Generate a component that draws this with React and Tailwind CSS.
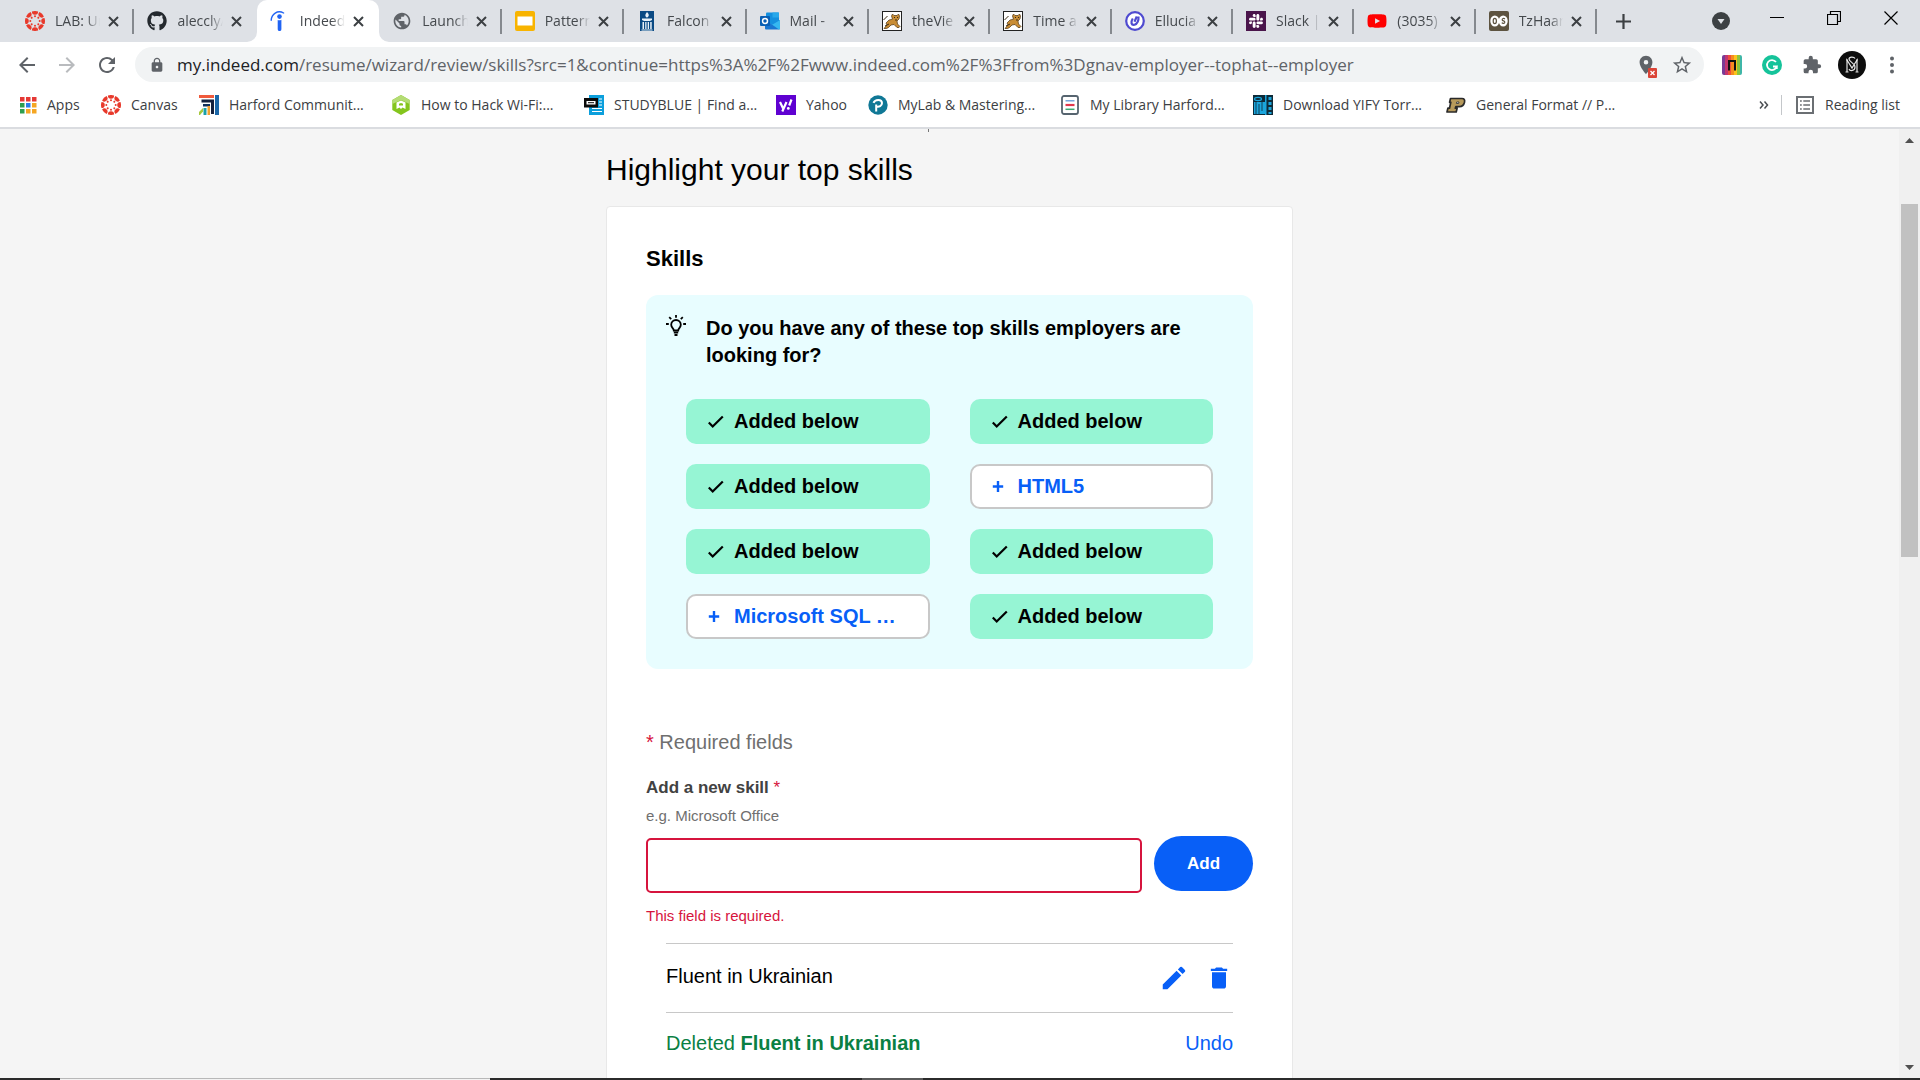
import { FaGithub, FaYoutube, FaSlack } from "react-icons/fa";
import { MdEdit, MdDelete, MdLock, MdPublic, MdArrowBack, MdArrowForward, MdRefresh, MdStarBorder, MdLocationOn } from "react-icons/md";

const TICKS = [0, 45, 90, 135, 180, 225, 270, 315];

function CanvasLogo() {
  return (
    <svg viewBox="0 0 20 20" className="size-5 shrink-0" aria-hidden="true">
      {TICKS.map((a) => (
        <g key={a} transform={`rotate(${a} 10 10)`} fill="#e8392b">
          <path d="M6.900 .5a10 10 0 0 1 6.200 0a3.100 3.300 0 0 1-6.200 0z" />
          <circle cx="10" cy="5.300" r="1" />
        </g>
      ))}
    </svg>
  );
}

function IndeedLogo() {
  return (
    <svg viewBox="0 0 20 20" className="size-5 shrink-0" aria-hidden="true">
      <circle cx="9.500" cy="5.600" r="2.300" fill="#2164f3" />
      <path d="M7.700 9q1.800.8 3.700-.2v9.400a1.800 1.800 0 0 1-3.700 0z" fill="#2164f3" />
      <path d="M1.200 9.200C1.500 3.200 7.500-1.500 13.600 2" fill="none" stroke="#2164f3" strokeWidth="1.400" strokeLinecap="round" />
    </svg>
  );
}

function SlidesLogo() {
  return (
    <svg viewBox="0 0 20 20" className="size-5 shrink-0" aria-hidden="true">
      <rect width="20" height="20" rx="2" fill="#f8b400" />
      <rect x="2.500" y="5.500" width="15" height="9" fill="#fff" />
    </svg>
  );
}

function TorchLogo() {
  return (
    <svg viewBox="0 0 20 20" className="size-5 shrink-0" aria-hidden="true">
      <rect x="3" width="14" height="20" fill="#0b4a84" />
      <path d="M10 1c2.500 2.500 2.300 4.500 0 5.600C7.700 5.500 8 3.500 10 1zM5 7.500h10v1.500l-2 1H7l-2-1zM5.500 11h1.500v7H5.500zM8.200 11h1.300v7H8.200zM10.700 11h1.300v7h-1.300zM13.200 11h1.500v7h-1.500zM4.500 18.400h11v1h-11z" fill="#e8f1f8" />
    </svg>
  );
}

function OutlookLogo() {
  return (
    <svg viewBox="0 0 20 20" className="size-5 shrink-0" aria-hidden="true">
      <rect x="6" y="1.500" width="13" height="13" rx="1" fill="#1490df" />
      <rect x="12.500" y="1.500" width="6.500" height="5" fill="#28a8ea" />
      <path d="M5 9l7.500 4.500L20 9v8.500a1 1 0 0 1-1 1H6a1 1 0 0 1-1-1z" fill="#1976d2" />
      <path d="M20 9v8.500a1 1 0 0 1-1 1L9 11.500l3.500 2z" fill="#35b8f1" />
      <rect y="5" width="10" height="10" rx="1" fill="#0a5fb4" />
      <circle cx="5" cy="10" r="2.500" fill="none" stroke="#fff" strokeWidth="1.500" />
    </svg>
  );
}

function CougarLogo() {
  return (
    <svg viewBox="0 0 20 20" className="size-5 shrink-0" aria-hidden="true">
      <rect x=".5" y=".5" width="19" height="19" fill="#fff" stroke="#222" />
      <path d="M2 17.500l3-3.500-1-2 3-3 3.500-.8-1-3.200 1-2 1.500 1.500h3l1.500-1.500 1 2-.5 3-2 2 .5 3 2.500 2.500-1 1-2 0-3-3-3 .5-2.500 2.500-2 1z" fill="#c98d35" stroke="#4d3412" strokeWidth=".7" />
      <path d="M1.500 9l4-4M12 6.500h1M15 6.500h1M13 9h2M3 15l4-2" stroke="#3a2a12" strokeWidth="1" />
    </svg>
  );
}

function EllucianLogo() {
  return (
    <svg viewBox="0 0 20 20" className="size-5 shrink-0" aria-hidden="true">
      <circle cx="10" cy="10" r="8.800" fill="#fff" stroke="#4f4bd0" strokeWidth="2.200" />
      <path d="M11.800 5.500L9.500 10.800M7.800 7.500c-2.600 4-1.300 7 1.700 6.300 2.800-.8 4.300-4.500 4-8.300" fill="none" stroke="#4f4bd0" strokeWidth="2.200" />
    </svg>
  );
}

function SlackTile() {
  return (
    <span className="flex size-5 shrink-0 items-center justify-center bg-[#4a154b] text-white">
      <FaSlack className="size-4" />
    </span>
  );
}

function OsLogo() {
  return (
    <span className="flex size-5 shrink-0 items-center justify-center rounded-xs bg-[#5d5340]">
      <svg viewBox="0 0 20 20" className="size-5" aria-hidden="true">
        <ellipse cx="5.800" cy="10" rx="4.500" ry="5.500" fill="#fff" />
        <ellipse cx="14.200" cy="10" rx="4.500" ry="5.500" fill="#fff" />
        <ellipse cx="5.800" cy="10" rx="1.600" ry="2.600" fill="none" stroke="#5d5340" strokeWidth="1.200" />
        <path d="M15.900 8c-1-1-2.900-.6-2.700.8s2.700.9 2.600 2.400-2.200 1.500-3 .5" fill="none" stroke="#5d5340" strokeWidth="1.200" />
      </svg>
    </span>
  );
}

const GRID9 = ["#e53935", "#e53935", "#e53935", "#2e9e4f", "#2b7de9", "#f5a623", "#2e9e4f", "#f5a623", "#f5a623"];

function AppsLogo() {
  return (
    <svg viewBox="0 0 17 17" className="size-[17px] shrink-0" aria-hidden="true">
      {GRID9.map((c, i) => (
        <rect key={i} x={(i % 3) * 6} y={Math.floor(i / 3) * 6} width="4.500" height="4.500" fill={c} />
      ))}
    </svg>
  );
}

function HarfordLogo() {
  return (
    <svg viewBox="0 0 20 20" className="size-5 shrink-0" aria-hidden="true">
      <path d="M0 0h15v3H0z" fill="#f05a3c" />
      <path d="M16 0h4v20h-4z" fill="#1b67a8" />
      <path d="M2.500 4.500h12v3h-12zM12 4.500h3V19h-3z" fill="#14213d" />
      <path d="M4 9h7v2.500H4z" fill="#12305a" />
      <path d="M0 17l4-4v3.500L1 20H0z" fill="#a7c83d" />
      <path d="M4.500 13h3v7h-3z" fill="#1aa0a8" />
      <path d="M8.500 11h2.500v9H8.500z" fill="#f2a02c" />
    </svg>
  );
}

function HackLogo() {
  return (
    <svg viewBox="0 0 20 20" className="size-5 shrink-0" aria-hidden="true">
      <path d="M10 0l8.700 5v10L10 20l-8.700-5V5z" fill="#84c51d" />
      <path d="M10 0l8.700 5v4L10 5 1.300 9V5z" fill="#b4dc74" />
      <path d="M5.500 7.500L10 5.500l4.500 2V14l-3-1.500L10 14l-1.500-1.500-3 1.500z" fill="#fff" />
      <path d="M8 8.800l2-.9 2 .9v1.700h-4z" fill="#84c51d" />
    </svg>
  );
}

function StudyLogo() {
  return (
    <svg viewBox="0 0 20 20" className="size-5 shrink-0" aria-hidden="true">
      <path d="M5 0h15v20H5z" fill="#0c9fdc" />
      <path d="M15 4h3M15 7h3M15 10h3M8 13.500h10M8 16.500h10" stroke="#fff" strokeWidth="1.200" />
      <path d="M0 3h14v9.500H0z" fill="#0a0a0a" />
      <path d="M2.500 6h9v3.500h-9z" fill="#fff" />
      <path d="M4 7.700h6" stroke="#0a0a0a" />
    </svg>
  );
}

function YahooLogo() {
  return (
    <svg viewBox="0 0 20 20" className="size-5 shrink-0" aria-hidden="true">
      <rect width="20" height="20" fill="#5f01d1" />
      <path d="M4 7l3 6.300M10.500 7l-4.200 9.500M15.500 4.500l-2.300 6" stroke="#fff" strokeWidth="2.200" fill="none" />
      <circle cx="12.300" cy="13.400" r="1.400" fill="#fff" />
    </svg>
  );
}

function PearsonLogo() {
  return (
    <svg viewBox="0 0 20 20" className="size-5 shrink-0" aria-hidden="true">
      <circle cx="10" cy="10" r="9.700" fill="#107896" />
      <path d="M8.200 16.500v-7M5.500 7.800C7 4.200 13.800 3.800 14 8c0 3-3 4-5.200 3.600" stroke="#fff" strokeWidth="2" fill="none" />
    </svg>
  );
}

function LibraryLogo() {
  return (
    <svg viewBox="0 0 20 20" className="size-5 shrink-0" aria-hidden="true">
      <rect x="2" y="1" width="16" height="18" rx="2" fill="#fff" stroke="#56646f" strokeWidth="1.800" />
      <path d="M5.500 5.800h9" stroke="#5e95d6" strokeWidth="1.300" />
      <path d="M5.500 10h9" stroke="#e2384d" strokeWidth="2.200" />
      <path d="M5.500 14.300h9" stroke="#3da871" strokeWidth="1.500" />
    </svg>
  );
}

function YifyLogo() {
  return (
    <svg viewBox="0 0 20 20" className="size-5 shrink-0" aria-hidden="true">
      <rect width="20" height="20" fill="#0e2a38" />
      <path d="M1 7h11V19H1zM12 0h1.500v20H12z" fill="#1ba5dc" />
      <ellipse cx="5" cy="4" rx="3.500" ry="1.600" fill="none" stroke="#1ba5dc" strokeWidth="1.200" />
      <path d="M3 7v12M6 9v10M9 7v9" stroke="#0e2a38" strokeWidth=".8" />
      <path d="M15.500 2h3v3h-3zM15.500 7h3v3h-3zM15.500 12h3v3h-3zM15.500 17h3v2h-3z" fill="#1ba5dc" />
    </svg>
  );
}

function PurdueLogo() {
  return (
    <svg viewBox="0 0 20 20" className="size-5 shrink-0" aria-hidden="true">
      <path d="M4.500 3.500H16q3.300 0 2.500 3.800-1 4.200-5 4.400H9.800l-.5 1.500h1.800l-.9 3.800H1l.9-3.800h1.600l1.300-5.900H3.600z" fill="#b79a5b" stroke="#2a2a2a" strokeWidth="1.700" strokeLinejoin="round" />
      <path d="M10.700 7H13l-.4 1.500h-2.200z" fill="#fff" stroke="#2a2a2a" strokeWidth=".8" />
    </svg>
  );
}

const TABS_LEFT = [
  { title: "LAB: Uni", icon: <CanvasLogo /> },
  { title: "aleccly/", icon: <FaGithub className="size-5 shrink-0 text-[#24292e]" /> },
  { title: "Indeed", icon: <IndeedLogo />, active: true },
  { title: "Launch", icon: <MdPublic className="size-5 shrink-0 text-[#5f6368]" /> },
  { title: "Pattern", icon: <SlidesLogo /> },
  { title: "Falcon", icon: <TorchLogo /> },
  { title: "Mail -", icon: <OutlookLogo /> },
];
const TABS_RIGHT = [
  { title: "theVie", icon: <CougarLogo /> },
  { title: "Time a", icon: <CougarLogo /> },
  { title: "Ellucia", icon: <EllucianLogo /> },
  { title: "Slack |", icon: <SlackTile /> },
  { title: "(3035)", icon: <FaYoutube className="size-5 shrink-0 text-[#f00]" /> },
  { title: "TzHaar", icon: <OsLogo /> },
];

function CloseMark() {
  return (
    <svg viewBox="0 0 11 11" className="size-[11px]" aria-hidden="true">
      <path d="M1 1l9 9M10 1l-9 9" stroke="#3c4043" strokeWidth="2" />
    </svg>
  );
}

function Tab({ tab, divider }) {
  const shell = tab.active ? "relative z-10 h-full rounded-t-[10px] bg-white" : "h-full";
  const line = divider ? "border-[#85898e]" : "border-transparent";
  return (
    <div role="tab" aria-selected={!!tab.active} className={`flex min-w-0 flex-1 items-center ${shell}`}>
      {tab.active && (
        <>
          <svg viewBox="0 0 10 10" className="absolute bottom-0 -left-2.5 size-2.5" aria-hidden="true"><path d="M10 0v10H0A10 10 0 0 0 10 0z" fill="#fff" /></svg>
          <svg viewBox="0 0 10 10" className="absolute -right-2.5 bottom-0 size-2.5" aria-hidden="true"><path d="M0 0v10h10A10 10 0 0 1 0 0z" fill="#fff" /></svg>
        </>
      )}
      <div className={`flex h-[25px] min-w-0 flex-1 items-center border-r-2 px-[13px] ${line}`}>
        {tab.icon}
        <span className="mr-2 ml-2.5 min-w-0 flex-1 overflow-hidden mask-r-from-70% whitespace-nowrap">{tab.title}</span>
        <button type="button" aria-label={`Close ${tab.title}`}><CloseMark /></button>
      </div>
    </div>
  );
}

function TabStrip() {
  return (
    <header className="flex h-[42px] shrink-0 items-center bg-[#dee1e6] pl-3 text-sm text-[#45494d]">
      <div role="tablist" aria-label="Open tabs" className="flex h-full items-center">
        <div className="flex h-full w-[857px] items-center">
          {TABS_LEFT.map((t, i) => <Tab key={t.title} tab={t} divider={i !== 1 && i !== 2} />)}
        </div>
        <div className="flex h-full w-[728px] items-center">
          {TABS_RIGHT.map((t) => <Tab key={t.title} tab={t} divider />)}
        </div>
      </div>
      <button type="button" aria-label="New tab" className="ml-[19px]">
        <svg viewBox="0 0 15 15" className="size-[15px]" aria-hidden="true"><path d="M7.500 0v15M0 7.500h15" stroke="#3c4043" strokeWidth="2.200" /></svg>
      </button>
      <div className="ml-auto flex items-center pr-[22px]">
        <button type="button" aria-label="Search tabs" className="mr-10">
          <svg viewBox="0 0 18 18" className="size-[18px]" aria-hidden="true"><circle cx="9" cy="9" r="9" fill="#3c4043" /><path d="M5.500 7h7l-3.500 5z" fill="#dee1e6" /></svg>
        </button>
        <div className="flex items-center gap-[43px] pb-[7px]">
          <button type="button" aria-label="Minimize"><svg viewBox="0 0 14 14" className="size-3.5" aria-hidden="true"><path d="M0 6.500h14" stroke="#000" /></svg></button>
          <button type="button" aria-label="Restore"><svg viewBox="0 0 14 14" className="size-3.5" aria-hidden="true"><path d="M.5 3.500h10v10H.5zM3.500 3V.5h10v10H11" fill="none" stroke="#000" strokeWidth="1.200" /></svg></button>
          <button type="button" aria-label="Close window"><svg viewBox="0 0 14 14" className="size-3.5" aria-hidden="true"><path d="M.5.5l13 13M13.500.5l-13 13" stroke="#000" strokeWidth="1.200" /></svg></button>
        </div>
      </div>
    </header>
  );
}

const STRIPES = ["#7a3b96", "#c2356f", "#ee4f3a", "#f68b1f", "#fbc31b", "#8bc53f", "#3fb6a8"];

function Toolbar() {
  return (
    <div className="flex h-[45px] shrink-0 items-center bg-white pr-[18px] pl-[15px] text-[#5f6368]">
      <button type="button" aria-label="Back"><MdArrowBack className="size-6" /></button>
      <button type="button" aria-label="Forward" className="ml-4 text-[#b9bbbe]"><MdArrowForward className="size-6" /></button>
      <button type="button" aria-label="Reload" className="ml-4"><MdRefresh className="size-6" /></button>
      <div className="ml-4 flex h-[35px] min-w-0 flex-1 items-center rounded-full bg-[#f1f3f4] pr-[11px] pl-3.5">
        <MdLock className="size-4 shrink-0" />
        <div className="ml-3 min-w-0 flex-1 truncate text-[17px]">
          <span className="text-[#202124]">my.indeed.com</span>/resume/wizard/review/skills?src=1&amp;continue=https%3A%2F%2Fwww.indeed.com%2F%3Ffrom%3Dgnav-employer--tophat--employer
        </div>
        <button type="button" aria-label="Location blocked" className="relative mr-3.5">
          <MdLocationOn className="size-[22px]" />
          <svg viewBox="0 0 9 10" className="absolute right-0 -bottom-0.5 h-2.5 w-[9px]" aria-hidden="true"><rect width="9" height="10" rx="1" fill="#db4437" /><path d="M2.500 3l4 4M6.500 3l-4 4" stroke="#fff" strokeWidth="1.300" /></svg>
        </button>
        <button type="button" aria-label="Bookmark this page"><MdStarBorder className="size-[22px]" /></button>
      </div>
      <div className="ml-[18px] flex items-center">
        <button type="button" aria-label="Rainbow extension">
          <svg viewBox="0 0 20 20" className="size-5 rounded-xs" aria-hidden="true">
            {STRIPES.map((c, i) => <rect key={c} x={i * 3} width="3" height="20" fill={c} />)}
            <path d="M7 15.500V6h6v9.500" fill="none" stroke="#111" strokeWidth="2" />
          </svg>
        </button>
        <button type="button" aria-label="Grammarly" className="ml-5">
          <svg viewBox="0 0 20 20" className="size-5" aria-hidden="true"><circle cx="10" cy="10" r="10" fill="#15c39a" /><path d="M14 7a5 5 0 1 0 .8 4.500H11M14.800 11.500V14" fill="none" stroke="#fff" strokeWidth="1.800" /></svg>
        </button>
        <button type="button" aria-label="Extensions" className="ml-5">
          <svg viewBox="0 0 24 24" className="size-5" aria-hidden="true"><path d="M20.500 11H19V7a2 2 0 0 0-2-2h-4V3.500a2.500 2.500 0 0 0-5 0V5H4a2 2 0 0 0-2 2v3.800h1.500a2.700 2.700 0 0 1 0 5.400H2V20a2 2 0 0 0 2 2h3.800v-1.500a2.700 2.700 0 0 1 5.400 0V22H17a2 2 0 0 0 2-2v-4h1.500a2.500 2.500 0 0 0 0-5z" fill="currentColor" /></svg>
        </button>
        <button type="button" aria-label="Profile" className="ml-4">
          <svg viewBox="0 0 28 28" className="size-7" aria-hidden="true"><circle cx="14" cy="14" r="14" fill="#0d0d0d" /><path d="M9 21V9l5 8 5-8v12M7.500 21h3M17.500 21h3M8 9h2M18 9h2M17 7.500c-1-2-6-2-6 .5 0 3 6 4 6 8s-5 4.500-6 2" fill="none" stroke="#e4e4e4" strokeWidth="1.200" /></svg>
        </button>
        <button type="button" aria-label="Menu" className="ml-4">
          <svg viewBox="0 0 20 20" className="size-5" aria-hidden="true"><g fill="#5f6368"><circle cx="10" cy="3.500" r="2" /><circle cx="10" cy="10" r="2" /><circle cx="10" cy="16.500" r="2" /></g></svg>
        </button>
      </div>
    </div>
  );
}

const BOOKMARKS = [
  { label: "Apps", icon: <AppsLogo />, width: "w-[81px]" },
  { label: "Canvas", icon: <CanvasLogo />, width: "w-[98px]" },
  { label: "Harford Communit...", icon: <HarfordLogo />, width: "w-48" },
  { label: "How to Hack Wi-Fi:...", icon: <HackLogo />, width: "w-[193px]" },
  { label: "STUDYBLUE | Find a...", icon: <StudyLogo />, width: "w-48" },
  { label: "Yahoo", icon: <YahooLogo />, width: "w-[92px]" },
  { label: "MyLab & Mastering...", icon: <PearsonLogo />, width: "w-48" },
  { label: "My Library Harford...", icon: <LibraryLogo />, width: "w-[193px]" },
  { label: "Download YIFY Torr...", icon: <YifyLogo />, width: "w-[193px]" },
  { label: "General Format // P...", icon: <PurdueLogo />, width: "w-48" },
];

function BookmarksBar() {
  return (
    <nav aria-label="Bookmarks" className="flex h-[42px] shrink-0 items-center border-b-2 border-[#dadce0] bg-white pb-1 pl-5 text-sm text-[#3c4043]">
      {BOOKMARKS.map((b) => (
        <a key={b.label} href="#" className={`flex shrink-0 items-center gap-2.5 whitespace-nowrap ${b.width}`}>
          {b.icon}
          <span>{b.label}</span>
        </a>
      ))}
      <div className="ml-auto flex items-center pr-5">
        <button type="button" aria-label="More bookmarks" className="mr-3">
          <svg viewBox="0 0 10 10" className="size-2.5" aria-hidden="true"><path d="M1 1.500L4 5 1 8.500M5.500 1.500l3 3.500-3 3.500" fill="none" stroke="#4a4e52" strokeWidth="1.500" /></svg>
        </button>
        <button type="button" className="flex items-center gap-[11px] border-l border-[#c4c7ca] pl-3.5">
          <svg viewBox="0 0 18 18" className="size-[18px]" aria-hidden="true"><path d="M1 1h16v16H1z" fill="none" stroke="#6b6f73" strokeWidth="2" /><path d="M4 5h1.800M4 9h1.800M4 13h1.800M7.300 5H14M7.300 9H14M7.300 13H14" stroke="#6b6f73" strokeWidth="1.700" /></svg>
          <span>Reading list</span>
        </button>
      </div>
    </nav>
  );
}

const SUGGESTIONS = [null, null, null, "HTML5", null, null, "Microsoft SQL …", null];

function Suggestion({ skill }) {
  if (!skill) {
    return (
      <button type="button" className="flex h-[45px] items-center rounded-[10px] bg-[#96f5d4] pl-5 font-bold text-black">
        <svg viewBox="0 0 20 20" className="size-5" aria-hidden="true"><path d="M2.800 10.500l3.900 4L16.800 4.500" fill="none" stroke="currentColor" strokeWidth="2.200" /></svg>
        <span className="ml-2">Added below</span>
      </button>
    );
  }
  return (
    <button type="button" className="flex h-[45px] items-center rounded-[10px] border-2 border-[#c8c8c8] bg-white pl-5 font-bold text-[#085ff7]">
      <svg viewBox="0 0 12 12" className="size-3" aria-hidden="true"><path d="M6 0v11M.8 5.500h10.400" stroke="currentColor" strokeWidth="2.400" /></svg>
      <span className="ml-3.5">{skill}</span>
    </button>
  );
}

function Bulb() {
  return (
    <svg viewBox="0 0 20 22" className="h-[22px] w-5 shrink-0" aria-hidden="true">
      <g fill="none" stroke="#000" strokeWidth="1.800">
        <path d="M7.800 15.500c0-2.200-2.600-2.700-2.600-5.700a4.800 4.800 0 0 1 9.600 0c0 3-2.600 3.500-2.600 5.700z" />
        <path d="M7.800 17.500h4.400M8.500 20h3M10 0v2.800M0 9h2.800M17.200 9H20M3.200 2.200l2 2M16.800 2.200l-2 2" />
      </g>
    </svg>
  );
}

function SkillsPage() {
  return (
    <main className="min-w-0 flex-1 overflow-hidden font-['Liberation_Sans',Arial,sans-serif] text-xl leading-[27px] text-black">
      <div className="mx-auto w-full max-w-[687px]">
        <div className="ml-[322px] h-[3px] w-px bg-[#777]"></div>
        <h1 className="mt-5 text-3xl leading-9">Highlight your top skills</h1>
        <section className="mt-[18px] rounded-t-sm border border-[#e8e8e8] bg-white px-[39px] pt-[38px] pb-10">
          <h2 className="text-[22px] leading-7 font-bold">Skills</h2>
          <div className="mt-[22px] rounded-xl bg-[#e8fdff] px-5 pt-5 pb-[30px]">
            <div className="flex items-start gap-5">
              <Bulb />
              <p className="font-bold">Do you have any of these top skills employers are looking for?</p>
            </div>
            <div className="mt-[30px] grid grid-cols-2 gap-x-10 gap-y-5 px-5">
              {SUGGESTIONS.map((s, i) => <Suggestion key={i} skill={s} />)}
            </div>
          </div>
          <p className="mt-[60px] text-[#6f6f6f]"><span className="text-[#d6143d]">*</span> Required fields</p>
          <form onSubmit={(e) => e.preventDefault()}>
            <label htmlFor="skill" className="mt-5 block text-[17px] leading-6 font-bold text-[#424242]">
              Add a new skill <span className="font-normal text-[#d6143d]">*</span>
            </label>
            <p id="skill-hint" className="mt-[5px] text-[15px] leading-[22px] text-[#6f6f6f]">e.g. Microsoft Office</p>
            <div className="mt-[9px] flex gap-3">
              <div className="flex-1 pt-0.5">
                <input id="skill" type="text" aria-describedby="skill-hint skill-error" aria-invalid="true" className="h-[55px] w-full rounded-[5px] border-2 border-[#d6143d] bg-white px-3 outline-none" />
              </div>
              <button type="submit" className="h-[55px] w-[99px] rounded-full bg-[#085ff7] text-[17px] font-bold text-white">Add</button>
            </div>
            <p id="skill-error" className="mt-3 text-[15px] leading-[22px] text-[#d6143d]">This field is required.</p>
          </form>
          <ul className="mx-5 mt-4">
            <li className="flex h-[69px] items-center justify-between border-t border-[#c8c8c8]">
              <span className="pb-1">Fluent in Ukrainian</span>
              <span className="flex gap-4 text-[#085ff7]">
                <button type="button" aria-label="Edit skill"><MdEdit className="size-[30px]" /></button>
                <button type="button" aria-label="Delete skill"><MdDelete className="size-7" /></button>
              </span>
            </li>
            <li className="flex h-[62px] items-center justify-between border-t border-[#c8c8c8]">
              <span className="text-[#0a8043]">Deleted <strong>Fluent in Ukrainian</strong></span>
              <button type="button" className="text-[#085ff7]">Undo</button>
            </li>
          </ul>
        </section>
      </div>
    </main>
  );
}

function ScrollRail() {
  return (
    <div className="flex w-[21px] shrink-0 flex-col items-center bg-[#f0f0f0] pt-[9px] pb-2" aria-hidden="true">
      <svg viewBox="0 0 9 5" className="h-[5px] w-[9px]"><path d="M4.500 0L9 5H0z" fill="#505050" /></svg>
      <div className="mt-[61px] h-[353px] w-[17px] bg-[#c1c1c1]"></div>
      <svg viewBox="0 0 9 5" className="mt-auto h-[5px] w-[9px]"><path d="M4.500 5L9 0H0z" fill="#505050" /></svg>
    </div>
  );
}

export default function App() {
  return (
    <div className="flex h-screen flex-col overflow-hidden bg-[#f5f5f5] font-['Open_Sans','Segoe_UI',sans-serif]">
      <TabStrip />
      <Toolbar />
      <BookmarksBar />
      <div className="flex min-h-0 flex-1">
        <SkillsPage />
        <ScrollRail />
      </div>
      <div className="flex h-0.5 shrink-0 bg-[#2b2b2b]" aria-hidden="true">
        <div className="ml-[60px] w-[430px] border-t border-[#b8b8b8] bg-[#f2f2f2]"></div>
        <div className="ml-[372px] w-[61px] bg-[#5a5a5a]"></div>
      </div>
    </div>
  );
}
